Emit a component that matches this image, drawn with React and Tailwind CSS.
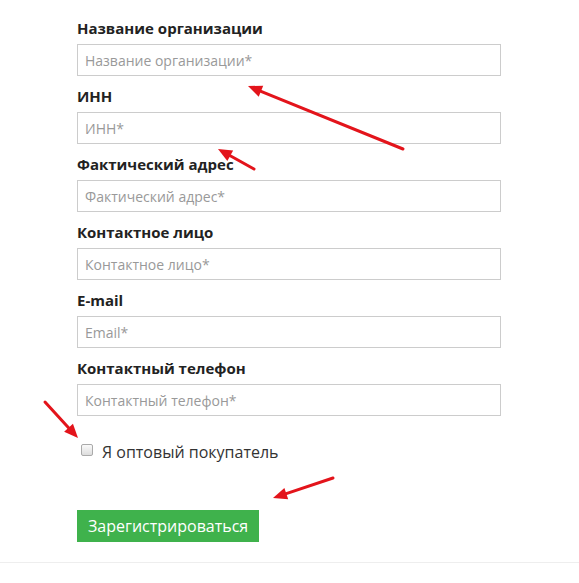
import React from "react";

const fields = [
  { label: "Название организации", placeholder: "Название организации*" },
  { label: "ИНН", placeholder: "ИНН*" },
  { label: "Фактический адрес", placeholder: "Фактический адрес*" },
  { label: "Контактное лицо", placeholder: "Контактное лицо*" },
  { label: "E-mail", placeholder: "Email*" },
  { label: "Контактный телефон", placeholder: "Контактный телефон*" },
];

// red arrows drawn over the form (tail -> tip)
const arrows = [
  [403, 149, 248, 86],
  [254, 169, 218, 149],
  [45, 402, 78, 438],
  [333, 478, 273, 498],
];

function Arrow({ x1, y1, x2, y2 }) {
  const a = Math.atan2(y2 - y1, x2 - x1);
  const len = 14;
  const w = 6;
  const bx = x2 - Math.cos(a) * len;
  const by = y2 - Math.sin(a) * len;
  const px = -Math.sin(a) * w;
  const py = Math.cos(a) * w;
  return (
    <g>
      <line x1={x1} y1={y1} x2={bx} y2={by} stroke="#e3141b" strokeWidth="3" strokeLinecap="round" />
      <polygon points={`${x2},${y2} ${bx + px},${by + py} ${bx - px},${by - py}`} fill="#e3141b" />
    </g>
  );
}

export default function App() {
  return (
    <div className="relative w-[579px] h-[583px] bg-white overflow-hidden" style={{ fontFamily: "'Open Sans', sans-serif" }}>
      <div className="pl-[77px] pt-[17px]">
        {fields.map((f) => (
          <div key={f.label} className="mb-[9px]">
            <div className="text-[15px] leading-[22px] font-bold text-[#222] mb-[5px]">{f.label}</div>
            <input
              placeholder={f.placeholder}
              className="w-[424px] h-[32px] border border-[#ccc] px-[7px] text-[14px] text-[#555] placeholder:text-[#999] outline-none"
            />
          </div>
        ))}

        <label className="flex items-center mt-[24px] h-[24px]">
          <span className="w-[12px] h-[12px] ml-[4px] mr-[9px] -mt-[4px] border border-[#aaa] rounded-[2px] bg-gradient-to-b from-[#fafafa] to-[#ddd]" />
          <span className="text-[16px] text-[#333]">Я оптовый покупатель</span>
        </label>

        <button className="mt-[46px] h-[32px] px-[11px] bg-[#3fb24c] text-white text-[16px] leading-[32px]">
          Зарегистрироваться
        </button>
      </div>

      <div className="absolute left-0 right-0 top-[562px] border-t border-[#eee]" />

      <svg className="absolute inset-0 pointer-events-none" width="579" height="583">
        {arrows.map(([x1, y1, x2, y2], i) => (
          <Arrow key={i} x1={x1} y1={y1} x2={x2} y2={y2} />
        ))}
      </svg>
    </div>
  );
}
